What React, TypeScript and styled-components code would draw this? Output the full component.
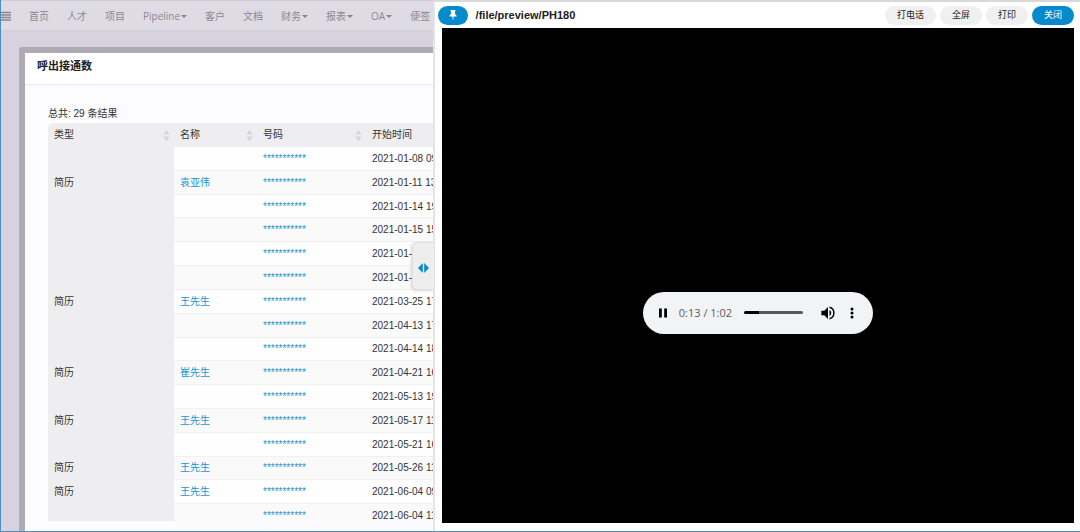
import React from "react";
import styled, { createGlobalStyle } from "styled-components";

const GlobalStyle = createGlobalStyle`
  *, *::before, *::after { box-sizing: border-box; }
  body {
    margin: 0;
    font-family: "Liberation Sans", "Noto Sans CJK SC", sans-serif;
    font-size: 10px;
    color: #333;
    background: #d6d3df;
  }
  button, input { font: inherit; margin: 0; }
  a { text-decoration: none; }
`;

const Shell = styled.div`
  display: flex;
  height: 100vh;
  overflow: hidden;
  border-left: 1px solid #4a90c4;
  border-bottom: 1px solid #4a90c4;
`;

const Main = styled.main`
  flex: 1;
  min-width: 0;
  display: flex;
  flex-direction: column;
  overflow: hidden;
`;

const Nav = styled.nav`
  flex: none;
  display: flex;
  align-items: center;
  gap: 18px;
  height: 31px;
  border-top: 1px solid #ceccd2;
  border-bottom: 1px solid #d2cfdb;
  background: #dedbe5;
  white-space: nowrap;
`;

const MenuButton = styled.button`
  display: flex;
  padding: 0;
  border: 0;
  background: none;
  color: #8a8792;
`;

const NavLink = styled.a`
  display: flex;
  align-items: center;
  gap: 1px;
  color: #8b8893;
  font-family: "Open Sans", "Noto Sans CJK SC", sans-serif;
  line-height: 14px;
`;

const Caret = styled.span`
  margin-top: 2px;
  border: 3px solid transparent;
  border-top-color: #85828d;
  border-bottom: 0;
`;

const Dialog = styled.section`
  flex: 1;
  min-height: 0;
  display: flex;
  flex-direction: column;
  margin: 16px 0 0 18px;
  border: solid #aeabb7;
  border-width: 6px 0 0 6px;
  border-top-left-radius: 4px;
  background: #fcfcfe;
`;

const DialogTitle = styled.h1`
  flex: none;
  margin: 0;
  padding: 6px 12px 10px;
  border-bottom: 1px solid #e9e9ed;
  background: #fff;
  color: #222;
  font-size: 11px;
  font-weight: 700;
  line-height: 15px;
`;

const DialogBody = styled.div`
  display: flex;
  flex-direction: column;
  min-height: 0;
  padding: 20px 0 10px 23px;
`;

const Summary = styled.p`
  flex: none;
  margin: 0;
  line-height: 18px;
`;

const TableScroll = styled.div`
  min-height: 0;
  overflow: hidden;
  border-top-left-radius: 6px;
`;

const Table = styled.table`
  width: 440px;
  height: 405px;
  table-layout: fixed;
  border-collapse: separate;
  border-spacing: 0;
  line-height: 14px;
  white-space: nowrap;
`;

const Column = styled.col<{ $width: number }>`
  width: ${({ $width }) => $width}px;
`;

const HeadCell = styled.th`
  height: 24px;
  padding: 0 6px;
  background: #eeeef0;
  font-weight: 400;
  text-align: left;
`;

const HeadContent = styled.div`
  display: flex;
  align-items: center;
  justify-content: space-between;
`;

const SortIcon = styled.svg`
  display: block;
  margin-right: -2px;
  fill: #d6d6da;
`;

const Cell = styled.td<{ $group?: boolean; $striped?: boolean }>`
  padding: 1px 6px 0;
  overflow: hidden;
  background: ${({ $group, $striped }) => ($group ? "#eeeef0" : $striped ? "#fafafb" : "#fefefe")};
  border-bottom: 1px solid ${({ $group }) => ($group ? "#eeeef0" : "#f0f0f3")};
`;

const CellLink = styled.a`
  color: #1a94d2;
`;

const Preview = styled.aside`
  position: relative;
  flex: none;
  width: 60%;
  display: flex;
  flex-direction: column;
  padding: 0 6px 8px 7px;
  border-left: 2px solid #e4e4e8;
  border-top: 2px solid #d9d9d9;
  background: #fff;
`;

const Toolbar = styled.header`
  flex: none;
  display: flex;
  align-items: center;
  gap: 4px;
  height: 26px;
  margin-left: -4px;
`;

const Pill = styled.button<{ $primary?: boolean }>`
  display: flex;
  align-items: center;
  justify-content: center;
  height: 19px;
  padding: 0 12px;
  border: 0;
  border-radius: 10px;
  background: ${({ $primary }) => ($primary ? "#078acb" : "#f0f0f0")};
  color: ${({ $primary }) => ($primary ? "#fff" : "#222")};
  font-size: 9px;
  line-height: 14px;
`;

const PinButton = styled(Pill)`
  padding: 0 11px;
`;

const Path = styled.h2`
  flex: 1;
  margin: 0 0 0 4px;
  color: #222;
  font-size: 11px;
  font-weight: 700;
`;

const Stage = styled.div`
  flex: 1;
  min-height: 0;
  display: flex;
  align-items: center;
  justify-content: center;
  padding-top: 74px;
  background: #000;
`;

const Player = styled.div`
  display: flex;
  align-items: center;
  width: 230px;
  height: 42px;
  padding: 0 14px;
  border-radius: 21px;
  background: #f1f3f4;
`;

const PlayerButton = styled.button`
  flex: none;
  display: flex;
  padding: 0;
  border: 0;
  background: none;
  color: #000;
`;

const Time = styled.span`
  flex: none;
  margin: 0 12px 0 10px;
  color: #5c5c5e;
  font-family: "Open Sans", sans-serif;
  font-size: 11px;
`;

const Seek = styled.input`
  flex: 1;
  min-width: 0;
  height: 3px;
  margin-right: 18px;
  appearance: none;
  border-radius: 2px;
  background: linear-gradient(to right, #000 26%, #5a5a5c 26%);
  &::-webkit-slider-thumb {
    appearance: none;
    width: 0;
    height: 0;
  }
`;

const MoreButton = styled(PlayerButton)`
  margin-left: 10px;
`;

const ResizeHandle = styled.button`
  position: absolute;
  top: 240px;
  left: -23px;
  display: flex;
  align-items: center;
  justify-content: center;
  width: 22px;
  height: 48px;
  padding: 3px 0 0;
  border: 1px solid #dfdfe1;
  border-right: 0;
  border-radius: 5px 0 0 5px;
  background: #eeeeef;
  box-shadow: -1px 1px 3px rgba(0, 0, 0, 0.15);
`;

const navItems = [
  { label: "首页" },
  { label: "人才" },
  { label: "项目" },
  { label: "Pipeline", menu: true },
  { label: "客户" },
  { label: "文档" },
  { label: "财务", menu: true },
  { label: "报表", menu: true },
  { label: "OA", menu: true },
  { label: "便签" },
];

const columns = [
  { label: "类型", width: 126 },
  { label: "名称", width: 83 },
  { label: "号码", width: 109 },
  { label: "开始时间", width: 122 },
];

const calls = [
  { name: "", start: "2021-01-08 09:12" },
  { name: "袁亚伟", start: "2021-01-11 13:40" },
  { name: "", start: "2021-01-14 19:05" },
  { name: "", start: "2021-01-15 15:21" },
  { name: "", start: "2021-01-18 09:33" },
  { name: "", start: "2021-01-19 09:47" },
  { name: "王先生", start: "2021-03-25 17:02" },
  { name: "", start: "2021-04-13 17:16" },
  { name: "", start: "2021-04-14 18:08" },
  { name: "崔先生", start: "2021-04-21 16:30" },
  { name: "", start: "2021-05-13 19:11" },
  { name: "王先生", start: "2021-05-17 11:25" },
  { name: "", start: "2021-05-21 16:14" },
  { name: "王先生", start: "2021-05-26 11:52" },
  { name: "王先生", start: "2021-06-04 09:20" },
  { name: "", start: "2021-06-04 11:37" },
];

export default function App() {
  return (
    <Shell>
      <GlobalStyle />
      <Main>
        <Nav>
          <MenuButton aria-label="菜单">
            <svg width="10" height="10" viewBox="0 0 10 10" stroke="currentColor" strokeWidth="1.4">
              <path d="M0 1.5h10M0 4h10M0 6.5h10M0 9h10" />
            </svg>
          </MenuButton>
          {navItems.map((item) => (
            <NavLink href="#" key={item.label}>
              {item.label}
              {item.menu && <Caret />}
            </NavLink>
          ))}
        </Nav>
        <Dialog>
          <DialogTitle>呼出接通数</DialogTitle>
          <DialogBody>
            <Summary>总共: 29 条结果</Summary>
            <TableScroll>
              <Table>
                <colgroup>
                  {columns.map((c) => (
                    <Column key={c.label} $width={c.width} />
                  ))}
                </colgroup>
                <thead>
                  <tr>
                    {columns.map((c) => (
                      <HeadCell key={c.label} scope="col">
                        <HeadContent>
                          {c.label}
                          <SortIcon width="7" height="11" viewBox="0 0 7 11">
                            <path d="M3.5 0L6.8 4.5H.2zM3.5 11L.2 6.5h6.6z" />
                          </SortIcon>
                        </HeadContent>
                      </HeadCell>
                    ))}
                  </tr>
                </thead>
                <tbody>
                  {calls.map((call, i) => (
                    <tr key={call.start}>
                      <Cell $group>{call.name && "简历"}</Cell>
                      <Cell $striped={i % 2 === 1}>
                        {call.name && <CellLink href="#">{call.name}</CellLink>}
                      </Cell>
                      <Cell $striped={i % 2 === 1}>
                        <CellLink href="#">***********</CellLink>
                      </Cell>
                      <Cell $striped={i % 2 === 1}>{call.start}</Cell>
                    </tr>
                  ))}
                </tbody>
              </Table>
            </TableScroll>
          </DialogBody>
        </Dialog>
      </Main>
      <Preview>
        <Toolbar>
          <PinButton $primary aria-label="固定">
            <svg width="8" height="10" viewBox="0 0 8 10" fill="#fff">
              <path d="M1.500 0h5v1.200H6v2.800l1.500 1.500v1H4.600L4.200 10h-.4l-.4-3.500H.5v-1L2 4V1.200h-.5z" />
            </svg>
          </PinButton>
          <Path>/file/preview/PH180</Path>
          <Pill>打电话</Pill>
          <Pill>全屏</Pill>
          <Pill>打印</Pill>
          <Pill $primary>关闭</Pill>
        </Toolbar>
        <Stage>
          <Player>
            <PlayerButton aria-label="暂停">
              <svg width="12" height="12" viewBox="0 0 12 12" fill="currentColor">
                <path d="M2 1.500h2.800v9H2zM7.200 1.500H10v9H7.200z" />
              </svg>
            </PlayerButton>
            <Time>0:13 / 1:02</Time>
            <Seek type="range" min={0} max={62} defaultValue={13} aria-label="播放进度" />
            <PlayerButton aria-label="音量">
              <svg width="14" height="14" viewBox="2.5 2.5 19 19" fill="currentColor">
                <path d="M3 9v6h4l5 5V4L7 9H3zm13.500 3A4.500 4.500 0 0 0 14 7.970v8.050A4.470 4.470 0 0 0 16.500 12zM14 3.230v2.060a7 7 0 0 1 0 13.420v2.060a9 9 0 0 0 0-17.540z" />
              </svg>
            </PlayerButton>
            <MoreButton aria-label="更多选项">
              <svg width="14" height="14" viewBox="0 0 14 14" fill="currentColor">
                <circle cx="7" cy="2.900" r="1.500" />
                <circle cx="7" cy="7" r="1.500" />
                <circle cx="7" cy="11.100" r="1.500" />
              </svg>
            </MoreButton>
          </Player>
        </Stage>
        <ResizeHandle aria-label="调整宽度">
          <svg width="11" height="10" viewBox="0 0 11 10" fill="#078acb">
            <path d="M4.800 0v10L0 5zM6.200 0v10L11 5z" />
          </svg>
        </ResizeHandle>
      </Preview>
    </Shell>
  );
}
